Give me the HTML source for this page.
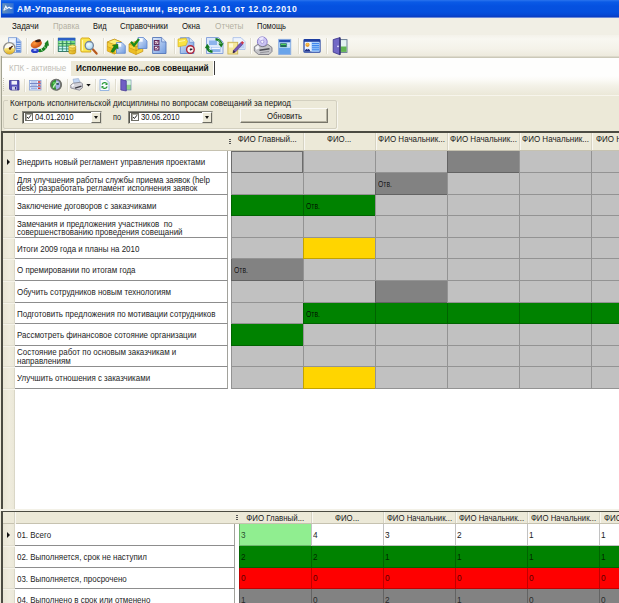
<!DOCTYPE html>
<html><head><meta charset="utf-8">
<style>
*{box-sizing:border-box;margin:0;padding:0}
html,body{width:619px;height:603px;overflow:hidden;background:#ece9d8;font-family:"Liberation Sans",sans-serif;font-size:9px;color:#000}
body>div,body>span,body>i,body>svg{position:absolute}
.t{white-space:pre;display:block}
.title{background:linear-gradient(#2a74ee 0,#0a5ae6 2px,#0551e0 6px,#0550de 12px,#0648d4 15px,#0a3cc0 17px,#c8d4f0 18px);border-left:1px solid #dfe4f6}
.menu{background:#f1efe5}
.tb1{background:linear-gradient(#f4f2ea 0,#f8f7f1 4px,#f4f2e9 14px,#edeadd 21px,#cbc8b8 22px,#cbc8b8 23px)}
.tabs{background:#fefefd}
.tb2{background:linear-gradient(#fefefd 0,#fbfaf6 4px,#f3f1e7 10px,#ebe8d8 19px,#f7f5ec 19px,#f7f5ec 20px)}
.sep{background:#e0ddcf;box-shadow:1px 0 0 #fdfcf9}
.gb{border:1px solid #d3d0c0;border-radius:2px;box-shadow:1px 1px 0 #f8f7f0}
.dt{background:#fff;border:1px solid #8a8a80;border-right-color:#d8d5c6;border-bottom-color:#d8d5c6;box-shadow:inset 1px 1px 0 #55554d}
.cb{background:#fff;border:1px solid #6e6e66;box-shadow:inset 1px 1px 0 #a8a8a0}
.dd{background:#ece9d8;border:1px solid #fff;border-right-color:#6a6a62;border-bottom-color:#6a6a62}
.dd i{position:absolute;left:2px;top:3px;width:0;height:0;border-top:3px solid #111;border-left:2.5px solid transparent;border-right:2.5px solid transparent}
.btn{background:#eeebdc;border:1px solid #fbfaf6;border-right-color:#77756a;border-bottom-color:#77756a;box-shadow:inset -1px -1px 0 #b5b2a2}
.grid{background:#fff;border-left:2px solid #4b4b42;border-top:2px solid #4b4b42}
.strip{background:linear-gradient(90deg,#e9e6d5,#efecde 60%,#ebe8d8);border-right:1px solid #dad7c7}
.hdr{background:#ece9d8;border-bottom:1px solid #c6c2b0}
.hsep{background:#d6d3c3;box-shadow:1px 0 0 #f8f7f1}
.rsep{background:#e0ddce;box-shadow:0 1px 0 #f4f2e8}
.tc{background:#fff;border-right:1px solid #a2a29c;border-bottom:1px solid #8d8d8d}
.c{border-left:1px solid rgba(0,0,0,.24);border-bottom:1px solid rgba(0,0,0,.24)}
.g{background:#c1c1c1}.dg{background:#828282}.gr{background:#008200}.y{background:#ffd500}.r{background:#fe0000}.lg{background:#90ee90}.w{background:#fff}
.foc{border:1px solid #6c6c6c}
.arr{width:0;height:0;border-left:3.5px solid #111;border-top:3.2px solid transparent;border-bottom:3.2px solid transparent}
</style></head><body>
<div class="title" style="left:0px;top:0px;width:619px;height:18px;"></div>
<svg style="left:2px;top:3px" width="12" height="11" viewBox="0 0 12 11"><defs><linearGradient id="ti" x1="0" x2="1"><stop offset="0" stop-color="#6a93b8"/><stop offset="1" stop-color="#2f6fd8"/></linearGradient></defs><rect x=".3" y=".2" width="11.400" height="10.300" fill="url(#ti)"/><path d="M1.800 7.500l2-4.300l1.300 2.300l2-1.200l1.500 1l1.800-.3" fill="none" stroke="#f4f8ff" stroke-width="1.200"/><path d="M4.800 5.500l-1.500 1.500" stroke="#f4f8ff" stroke-width=".9"/></svg>
<span class="t" style="left:17.00px;top:2.80px;font-size:9.6px;line-height:12px;font-weight:700;color:#f4f8ff;transform:scaleX(0.9020);transform-origin:0 50%;letter-spacing:.65px">АМ-Управление совещаниями, версия 2.1.01 от 12.02.2010</span>
<div class="menu" style="left:0px;top:18px;width:619px;height:17px;"></div>
<span class="t" style="left:12.10px;top:21.40px;font-size:9px;line-height:11px;color:#111;transform:scaleX(0.8836);transform-origin:0 50%;">Задачи</span>
<span class="t" style="left:52.50px;top:21.40px;font-size:9px;line-height:11px;color:#b4b1a3;transform:scaleX(0.8650);transform-origin:0 50%;">Правка</span>
<span class="t" style="left:92.50px;top:21.40px;font-size:9px;line-height:11px;color:#111;transform:scaleX(0.8284);transform-origin:0 50%;">Вид</span>
<span class="t" style="left:120.00px;top:21.40px;font-size:9px;line-height:11px;color:#111;transform:scaleX(0.8802);transform-origin:0 50%;">Справочники</span>
<span class="t" style="left:182.30px;top:21.40px;font-size:9px;line-height:11px;color:#111;transform:scaleX(0.8651);transform-origin:0 50%;">Окна</span>
<span class="t" style="left:214.60px;top:21.40px;font-size:9px;line-height:11px;color:#b4b1a3;transform:scaleX(0.9129);transform-origin:0 50%;">Отчеты</span>
<span class="t" style="left:256.70px;top:21.40px;font-size:9px;line-height:11px;color:#111;transform:scaleX(0.8342);transform-origin:0 50%;">Помощь</span>
<div class="tb1" style="left:0px;top:35px;width:619px;height:23px;"></div>
<div class="sep" style="left:26px;top:38px;width:1px;height:16px;"></div>
<div class="sep" style="left:53px;top:38px;width:1px;height:16px;"></div>
<div class="sep" style="left:103px;top:38px;width:1px;height:16px;"></div>
<div class="sep" style="left:174px;top:38px;width:1px;height:16px;"></div>
<div class="sep" style="left:201px;top:38px;width:1px;height:16px;"></div>
<div class="sep" style="left:250px;top:38px;width:1px;height:16px;"></div>
<div class="sep" style="left:298px;top:38px;width:1px;height:16px;"></div>
<div class="sep" style="left:326px;top:38px;width:1px;height:16px;"></div>
<svg style="left:0;top:35px" width="360" height="23" viewBox="0 35 360 23">
<defs>
<linearGradient id="bd" x1="0" y1="0" x2="1" y2="1"><stop offset="0" stop-color="#dfeafb"/><stop offset="1" stop-color="#6f9be0"/></linearGradient>
<linearGradient id="gold" x1="0" y1="0" x2="1" y2="1"><stop offset="0" stop-color="#fbe96a"/><stop offset="1" stop-color="#d9a514"/></linearGradient>
<linearGradient id="goldv" x1="0" y1="0" x2="0" y2="1"><stop offset="0" stop-color="#fdf08a"/><stop offset="1" stop-color="#dda81a"/></linearGradient>
<radialGradient id="lens" cx=".4" cy=".35" r=".7"><stop offset="0" stop-color="#f4fcff"/><stop offset="1" stop-color="#9fd2f2"/></radialGradient>
<radialGradient id="org" cx=".4" cy=".35" r=".7"><stop offset="0" stop-color="#ff9a3c"/><stop offset="1" stop-color="#c2420c"/></radialGradient>
</defs>
<!-- 1 doc + clock -->
<g>
<path d="M8.500 37.500h8.500l4 4v11h-12.500z" fill="#dfe9f8" stroke="#8fa9d8" stroke-width=".9"/>
<path d="M16 38h1l3.700 3.700v10.500h-4.700z" fill="#6590dc"/>
<path d="M17 37.800v3.700h3.700z" fill="#b9cef2"/>
<path d="M16.500 43.500h4M16.500 45.500h4M16.500 47.500h4M16.500 49.500h4" stroke="#cfe0fa" stroke-width=".9"/>
<rect x="10" y="39.500" width="5" height="2.500" fill="#f6f9ff"/>
<circle cx="9.400" cy="48.200" r="5.600" fill="#fafaf4" stroke="#8c8c88" stroke-width="1.400"/>
<path d="M4 48.800a5.400 5.400 0 0 0 10.800 0c-3-1.300-7.800-1.300-10.800 0z" fill="url(#goldv)"/>
<path d="M9.800 48.500l2.800-2.600" stroke="#4a2408" stroke-width="1.300"/>
<circle cx="10" cy="48.500" r="1.200" fill="#5a2c0c"/>
</g>
<!-- 2 people -->
<g>
<path d="M38.300 50.300c3.500 1 7.500-1.500 8.500-6.500" fill="none" stroke="#1a7f22" stroke-width="3.200"/>
<path d="M44.500 43.500l3.500-3.500l1 6z" fill="#1a7f22"/>
<path d="M40.800 48.200l1.500 2.800M43.800 46.200l2 2.300" stroke="#b5efb0" stroke-width=".9"/>
<ellipse cx="36.300" cy="44" rx="5.800" ry="3.800" fill="url(#org)" transform="rotate(-20 36.300 44)"/>
<ellipse cx="38" cy="40.800" rx="3" ry="1.400" fill="#3c1c10" transform="rotate(-10 38 40.800)"/>
<ellipse cx="34.900" cy="50.700" rx="3.900" ry="2.300" fill="#2a3fc8"/>
<ellipse cx="35" cy="50" rx="1.700" ry="1" fill="#a9b8ff"/>
</g>
<!-- 3 table + cylinder -->
<g>
<rect x="58.300" y="38.300" width="16.600" height="13.200" fill="#aaf0ee" stroke="#2c6f5e" stroke-width=".9"/>
<rect x="58.300" y="41" width="16.600" height="5" fill="#74dc78"/>
<rect x="58" y="37.800" width="17.200" height="2.700" fill="#2a5fc4"/>
<path d="M58.300 43.500h16.600M58.300 46.200h16.600M58.300 48.900h16.600M62.400 40.500v11M66.600 40.500v11M70.800 40.500v11" stroke="#2f7c62" stroke-width=".75"/>
<path d="M59.500 42.200h2M63.700 42.200h2M67.800 42.200h2M59.500 44.900h2M63.700 44.900h2M59.500 47.600h2M63.700 47.600h2M59.500 50.200h2M63.700 50.200h2" stroke="#f2fffb" stroke-width="1" opacity=".8"/>
<path d="M68.900 46.500v6a3.400 1.500 0 0 0 6.800 0v-6z" fill="url(#gold)" stroke="#c0900c" stroke-width=".6"/>
<ellipse cx="72.300" cy="46.500" rx="3.400" ry="1.500" fill="#fdf08a" stroke="#c0900c" stroke-width=".6"/>
<path d="M68.900 49.500a3.400 1.500 0 0 0 6.800 0" fill="none" stroke="#c0900c" stroke-width=".6"/>
</g>
<!-- 4 yellow doc + magnifier -->
<g>
<path d="M83 38h6l1.800 2v12h-8.800a1.200 1.200 0 0 1-1.200-1.200v-11a1.600 1.600 0 0 1 2.200-1.800z" fill="#fbe64e" stroke="#d2a010" stroke-width=".9"/>
<path d="M82.500 40v10.500" stroke="#fff8b8" stroke-width="1.200"/>
<path d="M96.600 53.600l-3.800-4.300" stroke="#b8581c" stroke-width="2.200" stroke-linecap="round"/>
<circle cx="89.300" cy="45.600" r="4.100" fill="url(#lens)" stroke="#76849a" stroke-width="1.300"/>
</g>
<!-- 5 gold boxes + arrow + blue doc -->
<g>
<path d="M107.300 42l7-2.800l7 2.800v9l-7 3l-7-3z" fill="#f6d23a" stroke="#c08c0c" stroke-width=".7"/>
<path d="M107.300 42l7-2.800l7 2.800l-7 2.600z" fill="#fdf07a" stroke="#c08c0c" stroke-width=".6"/>
<path d="M114.300 44.600v9.400M107.300 46.700l7 2.600l7-2.600" fill="none" stroke="#c08c0c" stroke-width=".7"/>
<path d="M107.300 46.700l7 2.600v4.700l-7-3z" fill="#e8b41c" opacity=".7"/>
<path d="M116.500 42.500h5.500l3.300 3.300v7.500h-8.800z" fill="url(#bd)" stroke="#5f86cc" stroke-width=".8"/>
<path d="M117.200 43.200h4l0 3.500h-4z" fill="#fbfdff"/>
<path d="M110.800 51.500l3.200-5.200l-1.600-.8l5.500-1.500l.3 5l-1.600-1l-3.500 4.500z" fill="#1a8a1a" stroke="#0c5c0c" stroke-width=".4"/>
</g>
<!-- 6 gold box + check + blue doc -->
<g>
<path d="M129 44l7-2.800l6.800 2.800v7.500l-6.800 3l-7-3z" fill="#f6d23a" stroke="#c08c0c" stroke-width=".7"/>
<path d="M129 44l7 2.800l6.800-2.800M136 46.800v7.700M129 47.800l7 2.800l6.800-2.800" fill="none" stroke="#c08c0c" stroke-width=".7"/>
<path d="M129 47.800l7 2.800v3.900l-7-3z" fill="#e8b41c" opacity=".7"/>
<path d="M138 37.500h5.500l3.500 3.500v7.500h-9z" fill="url(#bd)" stroke="#5f86cc" stroke-width=".8"/>
<path d="M138.700 38.200h4v3.500h-4z" fill="#fbfdff"/>
<path d="M131 41.800l3 3.700l5-6.500" fill="none" stroke="#1a8a1a" stroke-width="2.300"/>
</g>
<!-- 7 blue doc with checkboxes -->
<g>
<path d="M152.600 37.500h9l4.400 4.400v11.600h-13.400z" fill="url(#bd)" stroke="#5576b8" stroke-width=".9"/>
<path d="M161.600 37.500v4.400h4.400" fill="#d4e2f8" stroke="#5576b8" stroke-width=".7"/>
<rect x="154.300" y="40.600" width="4.600" height="3.800" fill="#f6f0f6" stroke="#5a2258" stroke-width="1.100"/>
<rect x="154.300" y="46.200" width="4.600" height="3.800" fill="#f6f0f6" stroke="#5a2258" stroke-width="1.100"/>
<path d="M155.300 42.300l1 1.100l2.200-2.600M155.300 47.900l1 1.100l2.200-2.600" fill="none" stroke="#7a2a50" stroke-width=".9"/>
</g>
<!-- 8 blue doc + yellow note + red clock -->
<g>
<path d="M180.300 37.800h9l4.500 4.500v11.200h-13.500z" fill="url(#bd)" stroke="#5f86cc" stroke-width=".9"/>
<path d="M189.300 37.800v4.500h4.500" fill="#d4e2f8" stroke="#5f86cc" stroke-width=".6"/>
<path d="M178 39l8-1l1.500 3.500l-1.500 3.800l-8 1.500z" fill="#f8e244" stroke="#d4aa14" stroke-width=".6"/>
<path d="M179 41.500l6-1" stroke="#fff8b0" stroke-width="1"/>
<circle cx="190.400" cy="49.500" r="3.800" fill="#fdf4f4" stroke="#b02438" stroke-width="1.400"/>
<path d="M190.400 49.500l2-.3" stroke="#222" stroke-width="1.300"/>
<circle cx="190.600" cy="49.500" r=".9" fill="#223"/>
</g>
<!-- 9 two docs + green arrows -->
<g>
<path d="M206.500 37.500h12l4.500 4.500v11.500h-16.500z" fill="#dce8fa" stroke="#7f9cd8" stroke-width=".9"/>
<rect x="209" y="40.500" width="8" height="4.500" fill="#8db4ec"/>
<rect x="211" y="47" width="9.500" height="5" fill="#8db4ec"/>
<rect x="211.500" y="47.500" width="8.500" height="1.600" fill="#f4f8ff"/>
<path d="M215.500 39.300a6 6 0 0 1 5.800 5" fill="none" stroke="#157a20" stroke-width="2.600"/>
<path d="M218.300 43.800l5.300-.5l-2.300 4.200z" fill="#157a20"/>
<path d="M218.500 40.200l1.200 1.400M220.500 42.500l.6 1.500" stroke="#a8eaa8" stroke-width=".8"/>
<path d="M212.500 51.800a6 6 0 0 1-5.300-4.500" fill="none" stroke="#157a20" stroke-width="2.600"/>
<path d="M204.800 48.200l5.200-.6l-2.800-3.900z" fill="#157a20"/>
<path d="M208.800 49.500l1.200 1.200" stroke="#a8eaa8" stroke-width=".8"/>
</g>
<!-- 10 yellow note + pencil + blue doc -->
<g>
<path d="M233 37.600h8l4 4v7.900h-12z" fill="#eef4fd" stroke="#a4bce6" stroke-width=".8"/>
<rect x="236" y="44" width="8" height="4.500" fill="#bcd2f4"/>
<rect x="227.900" y="42.300" width="9.800" height="11.700" fill="#f4e69a" stroke="#ccb454" stroke-width=".9"/>
<rect x="229" y="43.500" width="4" height="4" fill="#fdf8d8"/>
<path d="M233.500 50.300l7.200-7.700l1.900 1.800l-7.200 7.700l-2.500.8z" fill="#7656b8" stroke="#4a3478" stroke-width=".5"/>
<path d="M240.700 42.600l1.500-1.600l1.900 1.800l-1.500 1.600z" fill="#cc3848"/>
<path d="M233.500 50.300l1.900 1.800l-2.500.8z" fill="#2a2030"/>
</g>
<!-- 11 printer with purple disc -->
<g>
<circle cx="262.300" cy="41.800" r="4.900" fill="#cbc4f2" stroke="#8a7ccc" stroke-width="1"/>
<path d="M262.300 41.800l-3.500-3.200a4.800 4.800 0 0 1 5-1.300z" fill="#ece8ff"/>
<circle cx="262.300" cy="41.800" r="1.600" fill="#f6f4ff" stroke="#8a7ccc" stroke-width=".6"/>
<path d="M254.300 46.800l3.500-2.500l1.500 1.200c2 1.500 5 1.500 7 0l1.500-1.200l4.200 3.200v4l-3 3h-10.500l-4.200-3.500z" fill="#c4c4c8" stroke="#6e6e78" stroke-width=".8"/>
<path d="M255.200 47.300l3-2l1.500 3l-3.500 1.500z" fill="#f6f6fa"/>
<path d="M259.500 50.300l10-1.500" stroke="#4a4a52" stroke-width="1.500"/>
<path d="M260 52.800l9-1.300" stroke="#8c8c94" stroke-width=".9"/>
</g>
<!-- 12 blue window -->
<g>
<rect x="278.700" y="39.400" width="12" height="15" fill="#69a4ea" stroke="#8eb0e2" stroke-width="1"/>
<rect x="279.200" y="42" width="11" height="6" fill="#b4d6f8"/>
<rect x="279.200" y="39.900" width="11" height="2.300" fill="#274fb4"/>
<rect x="280.200" y="43.300" width="6.500" height="3.800" fill="#1f6a58"/>
<path d="M281 44.500h5" stroke="#4fd060" stroke-width="1"/>
<path d="M287.500 43.800h2.200M287.500 45.800h2.200" stroke="#f4faff" stroke-width=".8"/>
</g>
<!-- 13 ID card -->
<g>
<rect x="304" y="39.600" width="16" height="12.600" rx=".8" fill="#eaf3ff" stroke="#1f3fa0" stroke-width="1.200"/>
<rect x="304" y="39.600" width="16" height="2.200" fill="#1f3fa0"/>
<rect x="311.500" y="42.200" width="8" height="9.500" fill="#9cc8fa"/>
<path d="M312 43.500h7M312 45.600h7M312 47.700h7M312 49.800h7" stroke="#3f86ee" stroke-width="1.100"/>
<circle cx="307.500" cy="44.800" r="2.100" fill="#e8962c"/>
<circle cx="307.500" cy="44.300" r="1.200" fill="#f8c24a"/>
<path d="M304.800 51.400c0-3.600 5.400-3.600 5.400 0z" fill="#1c2f88"/>
<path d="M306.800 48.600l.7 1.500l.7-1.500z" fill="#f4f4ff"/>
</g>
<!-- 14 door -->
<g>
<rect x="340" y="39.600" width="7" height="12.800" fill="#e4f2f0" stroke="#62748e" stroke-width=".9"/>
<rect x="340.500" y="46.500" width="6" height="5.400" fill="#62b452"/>
<path d="M333.200 39.600l6.800-2v17.200l-6.800-2.600z" fill="#7268c6" stroke="#3a3488" stroke-width=".8"/>
<path d="M340 37.600v17.200" stroke="#20205a" stroke-width="1"/>
<circle cx="338" cy="46.300" r=".9" fill="#e8e4ff"/>
</g>
</svg>

<div class="tabs" style="left:0px;top:58px;width:619px;height:18px;"></div>
<div style="left:71px;top:61px;width:142px;height:15px;background:#ece9d8"></div>
<div style="left:214px;top:61px;width:1px;height:14px;background:#3c3c3c"></div>
<span class="t" style="left:8.70px;top:62.50px;font-size:9px;line-height:11px;color:#c2c0b8;transform:scaleX(0.8901);transform-origin:0 50%;">КПК - активные</span>
<span class="t" style="left:76.20px;top:62.50px;font-size:9px;line-height:11px;font-weight:700;color:#111;transform:scaleX(0.9214);transform-origin:0 50%;">Исполнение во...сов совещаний</span>
<div class="tb2" style="left:0px;top:76px;width:619px;height:20px;"></div>
<div class="sep" style="left:24px;top:79px;width:1px;height:13px;"></div>
<div class="sep" style="left:46px;top:79px;width:1px;height:13px;"></div>
<div class="sep" style="left:67px;top:79px;width:1px;height:13px;"></div>
<div class="sep" style="left:95px;top:79px;width:1px;height:13px;"></div>
<div class="sep" style="left:115px;top:79px;width:1px;height:13px;"></div>
<svg style="left:0;top:76px" width="140" height="20" viewBox="0 76 140 20">
<path d="M3.500 78v13" stroke="#c9c6b6" stroke-width="1" stroke-dasharray="1 1"/>
<!-- save -->
<g>
<path d="M9.500 80.500h9.500v9.500h-8.500l-1-1z" fill="#5550b8" stroke="#35308a" stroke-width=".8"/>
<rect x="11.500" y="80.800" width="5.500" height="3.800" fill="#f2f2fa"/>
<rect x="12" y="86.500" width="4.800" height="3.300" fill="#cfcfe8"/>
<rect x="15" y="87" width="1.200" height="2.500" fill="#35308a"/>
</g>
<!-- list -->
<g>
<rect x="29.500" y="80.500" width="11.500" height="9.500" fill="#e4edfb" stroke="#8aa4d8" stroke-width=".8"/>
<path d="M30 83.500h11M30 86.700h11" stroke="#6a7cc0" stroke-width=".9"/>
<path d="M31 82h6M31 85.100h6M31 88.300h6" stroke="#9db4e8" stroke-width="1.200"/>
<path d="M38 82h2.500M38 85.100h2.500M38 88.300h2.500" stroke="#d03030" stroke-width="1.400"/>
</g>
<!-- green circle -->
<g>
<circle cx="56" cy="84.800" r="5.400" fill="#2e952e" stroke="#70706c" stroke-width="1.300"/>
<path d="M56.500 79.500a5.400 5.400 0 0 1 0 10.600c-1.500-3.500-1.500-7 0-10.600z" fill="#a6b0e6"/>
<path d="M56.500 79.500a5.400 5.400 0 0 1 0 10.600" fill="none" stroke="#70706c" stroke-width="1.300"/>
<path d="M53.300 87.800c.8-2.800 2.200-4.500 4.700-5.300" fill="none" stroke="#c4f0c0" stroke-width="1.600"/>
<path d="M56.300 83.800l2.500.2" stroke="#0c2c3c" stroke-width="1.300"/>
<circle cx="54" cy="83" r="1.300" fill="#5cc45c"/>
</g>
<!-- printer -->
<g>
<path d="M73 79.200l5.500-.6l1.800 4.600l-6 1z" fill="#c4d8f4" stroke="#8ea6cc" stroke-width=".6"/>
<path d="M70.800 85l2.500-1.800l7.500-1l1.700 1.700v3.800l-3 2.500l-8.700-2.200z" fill="#d2d2d8" stroke="#80808a" stroke-width=".8"/>
<path d="M71.300 85.200l2.200-1.500l1 1.800l-2.500 1.500z" fill="#f8f8fc"/>
<path d="M75 88.200l6.500-2" stroke="#3c3c44" stroke-width="1.400"/>
<path d="M86.300 84h4.400l-2.200 2.600z" fill="#111"/>
</g>
<!-- refresh doc -->
<g>
<path d="M100 79.500h6l3 3v8h-9z" fill="#fafcff" stroke="#8fb0e0" stroke-width=".9"/>
<path d="M102 84.500a2.800 2.800 0 0 1 4.800-.8" fill="none" stroke="#2a9a3a" stroke-width="1.200"/>
<path d="M107.500 82.500v2.500h-2.500z" fill="#2a9a3a"/>
<path d="M107.200 86.500a2.800 2.800 0 0 1-4.800.8" fill="none" stroke="#2a9a3a" stroke-width="1.200"/>
<path d="M101.500 88.500v-2.500h2.500z" fill="#2a9a3a"/>
</g>
<!-- door -->
<g>
<rect x="125" y="80" width="6" height="10" fill="#8fd48a" stroke="#6a8ab0" stroke-width=".7"/>
<rect x="125.300" y="80.300" width="5.400" height="4.500" fill="#d8f0e8"/>
<path d="M120.800 79.300l5.500 1.500v10.200l-5.500-1z" fill="#6f5fc4" stroke="#43388f" stroke-width=".7"/>
</g>
</svg>

<div style="left:1px;top:56px;width:1px;height:75px;background:#a3a392"></div>
<div style="left:0px;top:56px;width:1px;height:75px;background:#e4e1d2"></div>
<div class="gb" style="left:3px;top:100px;width:334px;height:29px;"></div>
<div style="left:8px;top:96px;width:284px;height:10px;background:#ece9d8"></div>
<span class="t" style="left:9.70px;top:97.70px;font-size:8.5px;line-height:10px;color:#1a1a1a;transform:scaleX(0.9421);transform-origin:0 50%;">Контроль исполнительской дисциплины по вопросам совещаний за период</span>
<span class="t" style="left:13.20px;top:112.30px;font-size:8.5px;line-height:10px;color:#1a1a1a;transform:scaleX(0.7817);transform-origin:0 50%;">С</span>
<span class="t" style="left:113.20px;top:112.30px;font-size:8.5px;line-height:10px;color:#1a1a1a;transform:scaleX(0.8562);transform-origin:0 50%;">по</span>
<div class="dt" style="left:22px;top:111px;width:80px;height:13px;"></div>
<div class="cb" style="left:25px;top:113px;width:8px;height:8px;"><svg width="6" height="6" viewBox="0 0 6 6" style="position:absolute;left:0;top:0"><path d="M1 3 L2.4 4.5 L5 1.2" fill="none" stroke="#222" stroke-width="1"/></svg></div>
<span class="t" style="left:34.80px;top:112.00px;font-size:9.3px;line-height:11px;color:#111;transform:scaleX(0.8274);transform-origin:0 50%;">04.01.2010</span>
<div class="dd" style="left:91px;top:112px;width:10px;height:11px;"><i></i></div>
<div class="dt" style="left:128px;top:111px;width:85px;height:13px;"></div>
<div class="cb" style="left:131px;top:113px;width:8px;height:8px;"><svg width="6" height="6" viewBox="0 0 6 6" style="position:absolute;left:0;top:0"><path d="M1 3 L2.4 4.5 L5 1.2" fill="none" stroke="#222" stroke-width="1"/></svg></div>
<span class="t" style="left:140.80px;top:112.00px;font-size:9.3px;line-height:11px;color:#111;transform:scaleX(0.8274);transform-origin:0 50%;">30.06.2010</span>
<div class="dd" style="left:202px;top:112px;width:10px;height:11px;"><i></i></div>
<div class="btn" style="left:240px;top:108px;width:88px;height:15px;"></div>
<span class="t" style="left:267.00px;top:111.40px;font-size:8.5px;line-height:10px;color:#111;transform:scaleX(0.9091);transform-origin:0 50%;">Обновить</span>
<div style="left:0px;top:509px;width:619px;height:2px;background:#f3f1e7"></div>
<div class="grid" style="left:1px;top:131px;width:618px;height:378px;border-top-width:2px"></div>
<div class="strip" style="left:3px;top:133px;width:12px;height:376px;"></div>
<div class="hdr" style="left:3px;top:133px;width:616px;height:18px;"></div>
<div class="hsep" style="left:14px;top:133px;width:1px;height:18px;"></div>
<div style="left:228.5px;top:139.0px;width:2px;height:6px;background:repeating-linear-gradient(#555 0,#555 1px,transparent 1px,transparent 2px)"></div>
<div class="hsep" style="left:303px;top:133px;width:1px;height:17px;"></div>
<div class="hsep" style="left:375px;top:133px;width:1px;height:17px;"></div>
<div class="hsep" style="left:447px;top:133px;width:1px;height:17px;"></div>
<div class="hsep" style="left:519px;top:133px;width:1px;height:17px;"></div>
<div class="hsep" style="left:591px;top:133px;width:1px;height:17px;"></div>
<span class="t" style="left:236.24px;top:133.50px;font-size:8.5px;line-height:10px;color:#1a1a1a;transform:scaleX(0.9438);transform-origin:50% 50%;">ФИО Главный...</span>
<span class="t" style="left:326.36px;top:133.50px;font-size:8.5px;line-height:10px;color:#1a1a1a;transform:scaleX(0.9208);transform-origin:50% 50%;">ФИО...</span>
<span class="t" style="left:375.99px;top:133.50px;font-size:8.5px;line-height:10px;color:#1a1a1a;transform:scaleX(0.9406);transform-origin:50% 50%;">ФИО Начальник...</span>
<span class="t" style="left:447.99px;top:133.50px;font-size:8.5px;line-height:10px;color:#1a1a1a;transform:scaleX(0.9406);transform-origin:50% 50%;">ФИО Начальник...</span>
<span class="t" style="left:519.99px;top:133.50px;font-size:8.5px;line-height:10px;color:#1a1a1a;transform:scaleX(0.9406);transform-origin:50% 50%;">ФИО Начальник...</span>
<span class="t" style="left:595.50px;top:133.50px;font-size:8.5px;line-height:10px;color:#1a1a1a;transform:scaleX(0.9400);transform-origin:0 50%;">ФИО Н</span>
<div class="rsep" style="left:3px;top:172px;width:12px;height:1px;"></div>
<i class="arr" style="left:7px;top:158.5px"></i>
<div class="tc" style="left:15px;top:151px;width:213px;height:22px;"></div>
<span class="t" style="left:17.30px;top:157.20px;font-size:8.5px;line-height:10px;color:#1c1c1c;transform:scaleX(0.9350);transform-origin:0 50%;">Внедрить новый регламент управления проектами</span>
<div class="c g foc" style="left:231px;top:151px;width:72px;height:22px;"></div>
<div class="c g" style="left:303px;top:151px;width:72px;height:22px;"></div>
<div class="c g" style="left:375px;top:151px;width:72px;height:22px;"></div>
<div class="c dg" style="left:447px;top:151px;width:72px;height:22px;"></div>
<div class="c g" style="left:519px;top:151px;width:72px;height:22px;"></div>
<div class="c g" style="left:591px;top:151px;width:72px;height:22px;"></div>
<div class="rsep" style="left:3px;top:194px;width:12px;height:1px;"></div>
<div class="tc" style="left:15px;top:173px;width:213px;height:22px;"></div>
<span class="t" style="left:17.30px;top:174.60px;font-size:8.5px;line-height:10px;color:#1c1c1c;transform:scaleX(0.9350);transform-origin:0 50%;">Для улучшения работы службы приема заявок (help</span>
<span class="t" style="left:17.30px;top:183.40px;font-size:8.5px;line-height:10px;color:#1c1c1c;transform:scaleX(0.9350);transform-origin:0 50%;">desk) разработать регламент исполнения заявок</span>
<div class="c g" style="left:231px;top:173px;width:72px;height:22px;"></div>
<div class="c g" style="left:303px;top:173px;width:72px;height:22px;"></div>
<div class="c dg" style="left:375px;top:173px;width:72px;height:22px;"></div>
<span class="t" style="left:377.70px;top:179.20px;font-size:8.5px;line-height:10px;color:rgba(0,0,0,.85);transform:scaleX(0.7993);transform-origin:0 50%;">Отв.</span>
<div class="c g" style="left:447px;top:173px;width:72px;height:22px;"></div>
<div class="c g" style="left:519px;top:173px;width:72px;height:22px;"></div>
<div class="c g" style="left:591px;top:173px;width:72px;height:22px;"></div>
<div class="rsep" style="left:3px;top:215px;width:12px;height:1px;"></div>
<div class="tc" style="left:15px;top:195px;width:213px;height:21px;"></div>
<span class="t" style="left:17.30px;top:200.70px;font-size:8.5px;line-height:10px;color:#1c1c1c;transform:scaleX(0.9350);transform-origin:0 50%;">Заключение договоров с заказчиками</span>
<div class="c gr" style="left:231px;top:195px;width:72px;height:21px;"></div>
<div class="c gr" style="left:303px;top:195px;width:72px;height:21px;"></div>
<span class="t" style="left:305.70px;top:200.70px;font-size:8.5px;line-height:10px;color:rgba(0,0,0,.85);transform:scaleX(0.7993);transform-origin:0 50%;">Отв.</span>
<div class="c g" style="left:375px;top:195px;width:72px;height:21px;"></div>
<div class="c g" style="left:447px;top:195px;width:72px;height:21px;"></div>
<div class="c g" style="left:519px;top:195px;width:72px;height:21px;"></div>
<div class="c g" style="left:591px;top:195px;width:72px;height:21px;"></div>
<div class="rsep" style="left:3px;top:237px;width:12px;height:1px;"></div>
<div class="tc" style="left:15px;top:216px;width:213px;height:22px;"></div>
<span class="t" style="left:17.30px;top:218.60px;font-size:8.5px;line-height:10px;color:#1c1c1c;transform:scaleX(0.9350);transform-origin:0 50%;">Замечания и предложения участников&nbsp; по</span>
<span class="t" style="left:17.30px;top:227.40px;font-size:8.5px;line-height:10px;color:#1c1c1c;transform:scaleX(0.9350);transform-origin:0 50%;">совершенствованию проведения совещаний</span>
<div class="c g" style="left:231px;top:216px;width:72px;height:22px;"></div>
<div class="c g" style="left:303px;top:216px;width:72px;height:22px;"></div>
<div class="c g" style="left:375px;top:216px;width:72px;height:22px;"></div>
<div class="c g" style="left:447px;top:216px;width:72px;height:22px;"></div>
<div class="c g" style="left:519px;top:216px;width:72px;height:22px;"></div>
<div class="c g" style="left:591px;top:216px;width:72px;height:22px;"></div>
<div class="rsep" style="left:3px;top:258px;width:12px;height:1px;"></div>
<div class="tc" style="left:15px;top:238px;width:213px;height:21px;"></div>
<span class="t" style="left:17.30px;top:243.70px;font-size:8.5px;line-height:10px;color:#1c1c1c;transform:scaleX(0.9350);transform-origin:0 50%;">Итоги 2009 года и планы на 2010</span>
<div class="c g" style="left:231px;top:238px;width:72px;height:21px;"></div>
<div class="c y" style="left:303px;top:238px;width:72px;height:21px;"></div>
<div class="c g" style="left:375px;top:238px;width:72px;height:21px;"></div>
<div class="c g" style="left:447px;top:238px;width:72px;height:21px;"></div>
<div class="c g" style="left:519px;top:238px;width:72px;height:21px;"></div>
<div class="c g" style="left:591px;top:238px;width:72px;height:21px;"></div>
<div class="rsep" style="left:3px;top:280px;width:12px;height:1px;"></div>
<div class="tc" style="left:15px;top:259px;width:213px;height:22px;"></div>
<span class="t" style="left:17.30px;top:265.20px;font-size:8.5px;line-height:10px;color:#1c1c1c;transform:scaleX(0.9350);transform-origin:0 50%;">О премировании по итогам года</span>
<div class="c dg" style="left:231px;top:259px;width:72px;height:22px;"></div>
<span class="t" style="left:233.70px;top:265.20px;font-size:8.5px;line-height:10px;color:rgba(0,0,0,.85);transform:scaleX(0.7993);transform-origin:0 50%;">Отв.</span>
<div class="c g" style="left:303px;top:259px;width:72px;height:22px;"></div>
<div class="c g" style="left:375px;top:259px;width:72px;height:22px;"></div>
<div class="c g" style="left:447px;top:259px;width:72px;height:22px;"></div>
<div class="c g" style="left:519px;top:259px;width:72px;height:22px;"></div>
<div class="c g" style="left:591px;top:259px;width:72px;height:22px;"></div>
<div class="rsep" style="left:3px;top:302px;width:12px;height:1px;"></div>
<div class="tc" style="left:15px;top:281px;width:213px;height:22px;"></div>
<span class="t" style="left:17.30px;top:287.20px;font-size:8.5px;line-height:10px;color:#1c1c1c;transform:scaleX(0.9350);transform-origin:0 50%;">Обучить сотрудников новым технологиям</span>
<div class="c g" style="left:231px;top:281px;width:72px;height:22px;"></div>
<div class="c g" style="left:303px;top:281px;width:72px;height:22px;"></div>
<div class="c dg" style="left:375px;top:281px;width:72px;height:22px;"></div>
<div class="c g" style="left:447px;top:281px;width:72px;height:22px;"></div>
<div class="c g" style="left:519px;top:281px;width:72px;height:22px;"></div>
<div class="c g" style="left:591px;top:281px;width:72px;height:22px;"></div>
<div class="rsep" style="left:3px;top:323px;width:12px;height:1px;"></div>
<div class="tc" style="left:15px;top:303px;width:213px;height:21px;"></div>
<span class="t" style="left:17.30px;top:308.70px;font-size:8.5px;line-height:10px;color:#1c1c1c;transform:scaleX(0.9350);transform-origin:0 50%;">Подготовить предложения по мотивации сотрудников</span>
<div class="c g" style="left:231px;top:303px;width:72px;height:21px;"></div>
<div class="c gr" style="left:303px;top:303px;width:72px;height:21px;"></div>
<span class="t" style="left:305.70px;top:308.70px;font-size:8.5px;line-height:10px;color:rgba(0,0,0,.85);transform:scaleX(0.7993);transform-origin:0 50%;">Отв.</span>
<div class="c gr" style="left:375px;top:303px;width:72px;height:21px;"></div>
<div class="c gr" style="left:447px;top:303px;width:72px;height:21px;"></div>
<div class="c gr" style="left:519px;top:303px;width:72px;height:21px;"></div>
<div class="c gr" style="left:591px;top:303px;width:72px;height:21px;"></div>
<div class="rsep" style="left:3px;top:345px;width:12px;height:1px;"></div>
<div class="tc" style="left:15px;top:324px;width:213px;height:22px;"></div>
<span class="t" style="left:17.30px;top:330.20px;font-size:8.5px;line-height:10px;color:#1c1c1c;transform:scaleX(0.9350);transform-origin:0 50%;">Рассмотреть финансовое сотояние организации</span>
<div class="c gr" style="left:231px;top:324px;width:72px;height:22px;"></div>
<div class="c g" style="left:303px;top:324px;width:72px;height:22px;"></div>
<div class="c g" style="left:375px;top:324px;width:72px;height:22px;"></div>
<div class="c g" style="left:447px;top:324px;width:72px;height:22px;"></div>
<div class="c g" style="left:519px;top:324px;width:72px;height:22px;"></div>
<div class="c g" style="left:591px;top:324px;width:72px;height:22px;"></div>
<div class="rsep" style="left:3px;top:366px;width:12px;height:1px;"></div>
<div class="tc" style="left:15px;top:346px;width:213px;height:21px;"></div>
<span class="t" style="left:17.30px;top:347.10px;font-size:8.5px;line-height:10px;color:#1c1c1c;transform:scaleX(0.9350);transform-origin:0 50%;">Состояние работ по основым заказчикам и</span>
<span class="t" style="left:17.30px;top:355.90px;font-size:8.5px;line-height:10px;color:#1c1c1c;transform:scaleX(0.9350);transform-origin:0 50%;">направлениям</span>
<div class="c g" style="left:231px;top:346px;width:72px;height:21px;"></div>
<div class="c g" style="left:303px;top:346px;width:72px;height:21px;"></div>
<div class="c g" style="left:375px;top:346px;width:72px;height:21px;"></div>
<div class="c g" style="left:447px;top:346px;width:72px;height:21px;"></div>
<div class="c g" style="left:519px;top:346px;width:72px;height:21px;"></div>
<div class="c g" style="left:591px;top:346px;width:72px;height:21px;"></div>
<div class="rsep" style="left:3px;top:388px;width:12px;height:1px;"></div>
<div class="tc" style="left:15px;top:367px;width:213px;height:22px;"></div>
<span class="t" style="left:17.30px;top:373.20px;font-size:8.5px;line-height:10px;color:#1c1c1c;transform:scaleX(0.9350);transform-origin:0 50%;">Улучшить отношения с заказчиками</span>
<div class="c g" style="left:231px;top:367px;width:72px;height:22px;"></div>
<div class="c y" style="left:303px;top:367px;width:72px;height:22px;"></div>
<div class="c g" style="left:375px;top:367px;width:72px;height:22px;"></div>
<div class="c g" style="left:447px;top:367px;width:72px;height:22px;"></div>
<div class="c g" style="left:519px;top:367px;width:72px;height:22px;"></div>
<div class="c g" style="left:591px;top:367px;width:72px;height:22px;"></div>
<div class="grid" style="left:1px;top:511px;width:618px;height:93px;border-top-width:1px"></div>
<div class="strip" style="left:3px;top:512px;width:12px;height:92px;"></div>
<div class="hdr" style="left:3px;top:512px;width:616px;height:12px;"></div>
<div class="hsep" style="left:14px;top:512px;width:1px;height:12px;"></div>
<div style="left:236.0px;top:515.0px;width:2px;height:6px;background:repeating-linear-gradient(#555 0,#555 1px,transparent 1px,transparent 2px)"></div>
<div class="hsep" style="left:311px;top:512px;width:1px;height:11px;"></div>
<div class="hsep" style="left:383px;top:512px;width:1px;height:11px;"></div>
<div class="hsep" style="left:455px;top:512px;width:1px;height:11px;"></div>
<div class="hsep" style="left:527px;top:512px;width:1px;height:11px;"></div>
<div class="hsep" style="left:599px;top:512px;width:1px;height:11px;"></div>
<span class="t" style="left:244.24px;top:513.20px;font-size:8.5px;line-height:10px;color:#1a1a1a;transform:scaleX(0.9278);transform-origin:50% 50%;">ФИО Главный...</span>
<span class="t" style="left:334.36px;top:513.20px;font-size:8.5px;line-height:10px;color:#1a1a1a;transform:scaleX(0.9208);transform-origin:50% 50%;">ФИО...</span>
<span class="t" style="left:383.99px;top:513.20px;font-size:8.5px;line-height:10px;color:#1a1a1a;transform:scaleX(0.9181);transform-origin:50% 50%;">ФИО Начальник...</span>
<span class="t" style="left:455.99px;top:513.20px;font-size:8.5px;line-height:10px;color:#1a1a1a;transform:scaleX(0.9181);transform-origin:50% 50%;">ФИО Начальник...</span>
<span class="t" style="left:527.99px;top:513.20px;font-size:8.5px;line-height:10px;color:#1a1a1a;transform:scaleX(0.9181);transform-origin:50% 50%;">ФИО Начальник...</span>
<span class="t" style="left:603.50px;top:513.20px;font-size:8.5px;line-height:10px;color:#1a1a1a;transform:scaleX(0.9400);transform-origin:0 50%;">ФИО Н</span>
<div class="rsep" style="left:3px;top:545px;width:12px;height:1px;"></div>
<i class="arr" style="left:7px;top:531.5px"></i>
<div class="tc" style="left:15px;top:524px;width:220px;height:22px;"></div>
<span class="t" style="left:16.50px;top:530.20px;font-size:8.5px;line-height:10px;color:#1c1c1c;transform:scaleX(0.9350);transform-origin:0 50%;">01. Всего</span>
<div class="c lg" style="left:239px;top:524px;width:72px;height:22px;"></div>
<span class="t" style="left:241.20px;top:529.70px;font-size:9px;line-height:11px;color:rgba(0,0,0,.72);transform:scaleX(0.9200);transform-origin:0 50%;">3</span>
<div class="c w" style="left:311px;top:524px;width:72px;height:22px;"></div>
<span class="t" style="left:313.20px;top:529.70px;font-size:9px;line-height:11px;color:#1a1a1a;transform:scaleX(0.9200);transform-origin:0 50%;">4</span>
<div class="c w" style="left:383px;top:524px;width:72px;height:22px;"></div>
<span class="t" style="left:385.20px;top:529.70px;font-size:9px;line-height:11px;color:#1a1a1a;transform:scaleX(0.9200);transform-origin:0 50%;">3</span>
<div class="c w" style="left:455px;top:524px;width:72px;height:22px;"></div>
<span class="t" style="left:457.20px;top:529.70px;font-size:9px;line-height:11px;color:#1a1a1a;transform:scaleX(0.9200);transform-origin:0 50%;">2</span>
<div class="c w" style="left:527px;top:524px;width:72px;height:22px;"></div>
<span class="t" style="left:529.20px;top:529.70px;font-size:9px;line-height:11px;color:#1a1a1a;transform:scaleX(0.9200);transform-origin:0 50%;">1</span>
<div class="c w" style="left:599px;top:524px;width:72px;height:22px;"></div>
<span class="t" style="left:601.20px;top:529.70px;font-size:9px;line-height:11px;color:#1a1a1a;transform:scaleX(0.9200);transform-origin:0 50%;">1</span>
<div class="rsep" style="left:3px;top:567px;width:12px;height:1px;"></div>
<div class="tc" style="left:15px;top:546px;width:220px;height:22px;"></div>
<span class="t" style="left:16.50px;top:552.20px;font-size:8.5px;line-height:10px;color:#1c1c1c;transform:scaleX(0.9350);transform-origin:0 50%;">02. Выполняется, срок не наступил</span>
<div class="c gr" style="left:239px;top:546px;width:72px;height:22px;"></div>
<span class="t" style="left:241.20px;top:551.70px;font-size:9px;line-height:11px;color:rgba(0,0,0,.72);transform:scaleX(0.9200);transform-origin:0 50%;">2</span>
<div class="c gr" style="left:311px;top:546px;width:72px;height:22px;"></div>
<span class="t" style="left:313.20px;top:551.70px;font-size:9px;line-height:11px;color:rgba(0,0,0,.72);transform:scaleX(0.9200);transform-origin:0 50%;">2</span>
<div class="c gr" style="left:383px;top:546px;width:72px;height:22px;"></div>
<span class="t" style="left:385.20px;top:551.70px;font-size:9px;line-height:11px;color:rgba(0,0,0,.72);transform:scaleX(0.9200);transform-origin:0 50%;">1</span>
<div class="c gr" style="left:455px;top:546px;width:72px;height:22px;"></div>
<span class="t" style="left:457.20px;top:551.70px;font-size:9px;line-height:11px;color:rgba(0,0,0,.72);transform:scaleX(0.9200);transform-origin:0 50%;">1</span>
<div class="c gr" style="left:527px;top:546px;width:72px;height:22px;"></div>
<span class="t" style="left:529.20px;top:551.70px;font-size:9px;line-height:11px;color:rgba(0,0,0,.72);transform:scaleX(0.9200);transform-origin:0 50%;">1</span>
<div class="c gr" style="left:599px;top:546px;width:72px;height:22px;"></div>
<span class="t" style="left:601.20px;top:551.70px;font-size:9px;line-height:11px;color:rgba(0,0,0,.72);transform:scaleX(0.9200);transform-origin:0 50%;">1</span>
<div class="rsep" style="left:3px;top:588px;width:12px;height:1px;"></div>
<div class="tc" style="left:15px;top:568px;width:220px;height:21px;"></div>
<span class="t" style="left:16.50px;top:573.70px;font-size:8.5px;line-height:10px;color:#1c1c1c;transform:scaleX(0.9350);transform-origin:0 50%;">03. Выполняется, просрочено</span>
<div class="c r" style="left:239px;top:568px;width:72px;height:21px;"></div>
<span class="t" style="left:241.20px;top:573.20px;font-size:9px;line-height:11px;color:rgba(0,0,0,.72);transform:scaleX(0.9200);transform-origin:0 50%;">0</span>
<div class="c r" style="left:311px;top:568px;width:72px;height:21px;"></div>
<span class="t" style="left:313.20px;top:573.20px;font-size:9px;line-height:11px;color:rgba(0,0,0,.72);transform:scaleX(0.9200);transform-origin:0 50%;">0</span>
<div class="c r" style="left:383px;top:568px;width:72px;height:21px;"></div>
<span class="t" style="left:385.20px;top:573.20px;font-size:9px;line-height:11px;color:rgba(0,0,0,.72);transform:scaleX(0.9200);transform-origin:0 50%;">0</span>
<div class="c r" style="left:455px;top:568px;width:72px;height:21px;"></div>
<span class="t" style="left:457.20px;top:573.20px;font-size:9px;line-height:11px;color:rgba(0,0,0,.72);transform:scaleX(0.9200);transform-origin:0 50%;">0</span>
<div class="c r" style="left:527px;top:568px;width:72px;height:21px;"></div>
<span class="t" style="left:529.20px;top:573.20px;font-size:9px;line-height:11px;color:rgba(0,0,0,.72);transform:scaleX(0.9200);transform-origin:0 50%;">0</span>
<div class="c r" style="left:599px;top:568px;width:72px;height:21px;"></div>
<span class="t" style="left:601.20px;top:573.20px;font-size:9px;line-height:11px;color:rgba(0,0,0,.72);transform:scaleX(0.9200);transform-origin:0 50%;">0</span>
<div class="rsep" style="left:3px;top:610px;width:12px;height:1px;"></div>
<div class="tc" style="left:15px;top:589px;width:220px;height:22px;"></div>
<span class="t" style="left:16.50px;top:595.20px;font-size:8.5px;line-height:10px;color:#1c1c1c;transform:scaleX(0.9350);transform-origin:0 50%;">04. Выполнено в срок или отменено</span>
<div class="c dg" style="left:239px;top:589px;width:72px;height:22px;"></div>
<span class="t" style="left:241.20px;top:594.70px;font-size:9px;line-height:11px;color:rgba(0,0,0,.72);transform:scaleX(0.9200);transform-origin:0 50%;">1</span>
<div class="c dg" style="left:311px;top:589px;width:72px;height:22px;"></div>
<span class="t" style="left:313.20px;top:594.70px;font-size:9px;line-height:11px;color:rgba(0,0,0,.72);transform:scaleX(0.9200);transform-origin:0 50%;">0</span>
<div class="c dg" style="left:383px;top:589px;width:72px;height:22px;"></div>
<span class="t" style="left:385.20px;top:594.70px;font-size:9px;line-height:11px;color:rgba(0,0,0,.72);transform:scaleX(0.9200);transform-origin:0 50%;">2</span>
<div class="c dg" style="left:455px;top:589px;width:72px;height:22px;"></div>
<span class="t" style="left:457.20px;top:594.70px;font-size:9px;line-height:11px;color:rgba(0,0,0,.72);transform:scaleX(0.9200);transform-origin:0 50%;">1</span>
<div class="c dg" style="left:527px;top:589px;width:72px;height:22px;"></div>
<span class="t" style="left:529.20px;top:594.70px;font-size:9px;line-height:11px;color:rgba(0,0,0,.72);transform:scaleX(0.9200);transform-origin:0 50%;">0</span>
<div class="c dg" style="left:599px;top:589px;width:72px;height:22px;"></div>
<span class="t" style="left:601.20px;top:594.70px;font-size:9px;line-height:11px;color:rgba(0,0,0,.72);transform:scaleX(0.9200);transform-origin:0 50%;">0</span>
</body></html>
